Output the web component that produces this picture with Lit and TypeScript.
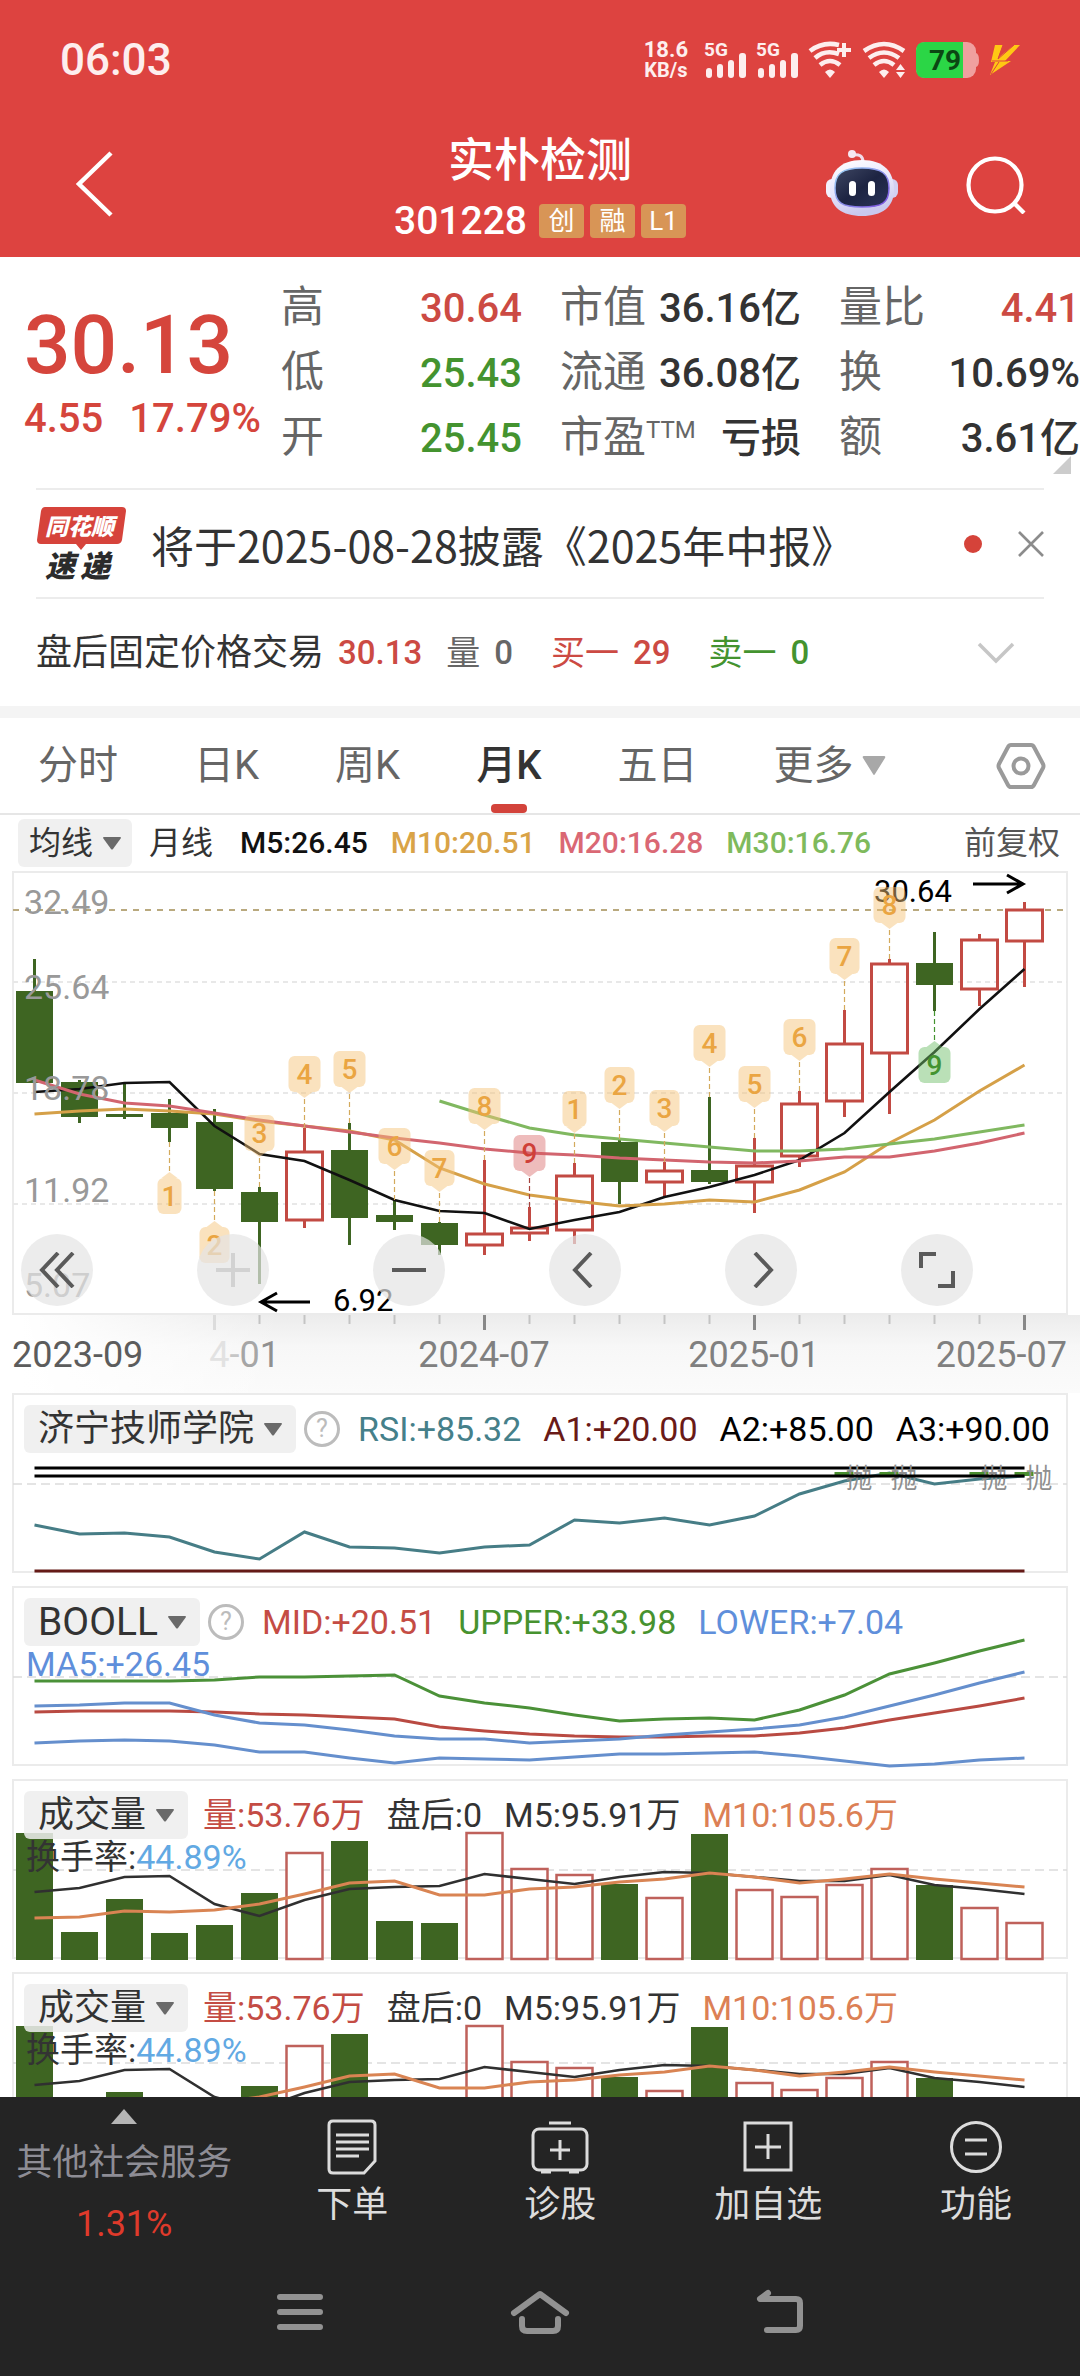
import { LitElement, html, svg, css } from "lit";
import { customElement, property } from "lit/decorators.js";

const FONT = css`Roboto, "Noto Sans CJK SC", sans-serif`;

const STEP = 45;
const FIRST = 34.5;
const cx = (i: number) => FIRST + STEP * i;
const points = (ys: number[], from = 0) => ys.map((y, i) => `${cx(i + from)},${y}`).join(" ");
const line = (ys: number[], color: string, from = 0, width = 3) =>
  svg`<polyline points=${points(ys, from)} fill="none" stroke=${color} stroke-width=${width}></polyline>`;

const UP = "#c24a43";
const DOWN = "#3e6522";

/* up?, high, body top, body bottom, low */
type Candle = [number, number, number, number, number];
const CANDLES: Candle[] = [
  [0, 88, 120, 212, 212], [0, 209, 211, 246, 252], [0, 212, 243, 246, 248], [0, 228, 242, 257, 271],
  [0, 238, 251, 318, 320], [0, 316, 321, 351, 413], [1, 257, 281, 349, 357], [0, 252, 279, 347, 374],
  [0, 329, 344, 351, 359], [0, 351, 352, 374, 384], [1, 289, 363, 374, 384], [1, 336, 357, 362, 370],
  [1, 292, 305, 359, 373], [0, 268, 271, 311, 333], [1, 291, 300, 311, 326], [0, 226, 299, 311, 313],
  [1, 267, 295, 311, 342], [1, 220, 233, 285, 296], [1, 139, 173, 230, 246], [1, 88, 93, 182, 243],
  [0, 61, 92, 114, 140], [1, 63, 69, 118, 135], [1, 31, 39, 70, 116],
];

const MA5 = [221, 218, 212, 211, 255, 283, 290, 309, 329, 340, 342, 358, 349, 341, 326, 316, 304, 289, 262, 221, 181, 138, 98];
const MA10 = [243, 240, 238, 240, 243, 250, 255, 260, 269, 297, 313, 324, 330, 335, 333, 329, 331, 319, 301, 272, 249, 220, 194];
const MA20 = [209, 223, 232, 235, 242, 249, 255, 261, 267, 272, 278, 282, 284, 287, 289, 291, 292, 290, 286, 286, 280, 272, 262];
const MA30 = [230, 244, 257, 264, 268, 272, 276, 280, 280, 278, 273, 268, 261, 254];

/* candle index, digit, placed below the candle?, tone */
const MARKS: [number, string, boolean, string][] = [
  [3, "1", true, "amber"], [4, "2", true, "amber"], [5, "3", false, "amber"], [6, "4", false, "amber"],
  [7, "5", false, "amber"], [8, "6", false, "amber"], [9, "7", false, "amber"], [10, "8", false, "amber"],
  [11, "9", false, "red"], [12, "1", false, "amber"], [13, "2", false, "amber"], [14, "3", false, "amber"],
  [15, "4", false, "amber"], [16, "5", false, "amber"], [17, "6", false, "amber"], [18, "7", false, "amber"],
  [19, "8", false, "amber"], [20, "9", true, "green"],
];
const TONES: Record<string, { bg: string; fg: string; ln: string }> = {
  amber: { bg: "rgba(245,195,120,.48)", fg: "#eaa542", ln: "#d3aa5c" },
  red: { bg: "rgba(215,95,95,.42)", fg: "#cf3f38", ln: "#a5423c" },
  green: { bg: "rgba(110,190,105,.48)", fg: "#43932f", ln: "#43932f" },
};
const MARK_WIDTH: Record<string, number> = { "1": 24, "2": 30, "3": 30, "7": 30 };

const RSI = [132, 141, 140, 144, 159, 166, 139, 154, 155, 160, 154, 152, 127, 130, 125, 132, 123, 101, 88, 80, 91, 86, 83];
const UPPER = [95, 95, 95, 95, 94, 91, 91, 90, 89, 110, 117, 122, 129, 135, 133, 132, 134, 124, 109, 88, 77, 65, 54];
const MID = [126, 125, 125, 125, 126, 128, 129, 131, 133, 141, 145, 148, 150, 151, 151, 150, 150, 147, 142, 134, 127, 120, 112];
const BOLL5 = [120, 119, 117, 117, 129, 137, 139, 144, 150, 153, 153, 157, 155, 153, 149, 146, 143, 139, 131, 120, 109, 97, 86];
const LOWER = [157, 155, 154, 155, 159, 166, 166, 172, 177, 172, 173, 174, 171, 168, 168, 167, 166, 170, 175, 180, 178, 174, 172];
const VOL = [54, 153, 120, 154, 146, 114, 74, 62, 142, 144, 54, 90, 96, 105, 119, 55, 111, 118, 106, 90, 106, 129, 144];
const VOL5 = [113, 109, 98, 97, 125, 137, 121, 110, 108, 107, 95, 100, 105, 98, 93, 94, 98, 102, 102, 96, 106, 110, 115];
const VOL10 = [139, 138, 132, 133, 131, 125, 115, 104, 102, 116, 116, 110, 108, 103, 100, 94, 98, 104, 100, 95, 100, 104, 108];

@customElement("status-bar")
class StatusBar extends LitElement {
  static styles = css`
    :host { display: flex; align-items: center; height: 120px; padding: 0 60px; color: #fdeeee; font-family: ${FONT}; }
    .time { flex: 1; font-size: 44px; font-weight: 500; line-height: 48px; }
    .icons { display: flex; align-items: center; gap: 10px; }
    .speed { display: flex; flex-direction: column; align-items: center; margin-right: 6px; font-weight: 700; font-size: 22px; line-height: 20px; }
    .unit { font-size: 20px; }
    svg { display: block; overflow: visible; }
    .net { font: 700 19px Roboto, sans-serif; }
    .level { font: 700 28px Roboto, sans-serif; }
  `;
  private signal() {
    return html`<svg width="42" height="38" viewBox="0 0 42 38" fill="#fdeeee" aria-hidden="true">
      <text class="net" x="0" y="15">5G</text>
      <rect x="2" y="27" width="6" height="10" rx="3"></rect><rect x="13" y="23" width="6" height="14" rx="3"></rect>
      <rect x="24" y="19" width="6" height="18" rx="3"></rect><rect x="35" y="12" width="7" height="25" rx="3"></rect>
    </svg>`;
  }
  private wifi(extra: unknown, short = false) {
    return html`<svg width="44" height="38" viewBox="0 0 44 38" fill="none" stroke="#fdeeee" stroke-width="4.6" aria-hidden="true">
      <path d=${short ? "M2 10Q15 0 31 4" : "M2 10Q22 -4 42 10"}></path>
      <path d=${short ? "M7 17Q17 8 31 13" : "M7 17Q22 6 37 17"}></path><path d="M12 24Q22 16 32 24"></path>
      <path d="M17 31Q22 26 27 31L22 37Z" fill="#fdeeee" stroke="none"></path>${extra}
    </svg>`;
  }
  render() {
    return html`
      <div class="time">06:03</div>
      <div class="icons">
        <div class="speed"><span>18.6</span><span class="unit">KB/s</span></div>
        ${this.signal()}${this.signal()}
        ${this.wifi(svg`<path d="M36 2V16M29 9H43" stroke-width="4"></path>`, true)}
        ${this.wifi(svg`<path d="M34 29L38.500 23L43 29ZM34 31L38.500 37L43 31Z" fill="#fdeeee" stroke="none"></path>`)}
        <svg width="64" height="36" viewBox="0 0 64 36" role="img" aria-label="79%">
          <rect width="60" height="36" rx="9" fill="#f0a09f"></rect>
          <path d="M60 11Q63 12 63 18T60 25Z" fill="#f0a09f"></path>
          <path d="M9 0H47V36H9Q0 36 0 27V9Q0 0 9 0Z" fill="#2bd646"></path>
          <text class="level" x="13" y="28" fill="#0b4713">79</text>
        </svg>
        <svg width="30" height="32" viewBox="0 0 30 32" fill="#ffc814" aria-hidden="true">
          <path d="M5 1H13L8 14L24 1H30L15 17H21L0 31L5 18H1Z"></path>
          <path d="M13 1L8 15L24 1M2 17H18M1 30L9 18" fill="none" stroke="#dd4340" stroke-width="1"></path>
        </svg>
      </div>`;
  }
}

@customElement("title-bar")
class TitleBar extends LitElement {
  static styles = css`
    :host { display: grid; grid-template-columns: 1fr auto 1fr; align-items: center; height: 127px; padding: 0 54px 10px; color: #fff; font-family: ${FONT}; }
    button { border: 0; padding: 0; background: none; color: inherit; cursor: pointer; justify-self: start; }
    .back { margin-left: 20px; }
    svg { display: block; }
    .mid { display: flex; flex-direction: column; align-items: center; gap: 12px; padding-top: 8px; }
    h1 { margin: 0; font-size: 46px; font-weight: 500; line-height: 54px; }
    .sub { display: flex; align-items: center; gap: 6px; font-size: 39px; font-weight: 500; line-height: 44px; }
    .code { margin-right: 6px; }
    .tag { width: 45px; border-radius: 4px; background: #d89556; font-size: 26px; font-weight: 400; line-height: 34px; text-align: center; }
    .acts { display: flex; align-items: center; justify-content: flex-end; gap: 68px; }
  `;
  render() {
    return html`
      <button class="back" aria-label="返回"><svg width="40" height="66" viewBox="0 0 40 66" fill="none" stroke="#fff" stroke-width="4.500"><path d="M37 2L5 33L37 64"></path></svg></button>
      <div class="mid">
        <h1>实朴检测</h1>
        <div class="sub"><span class="code">301228</span><span class="tag">创</span><span class="tag">融</span><span class="tag">L1</span></div>
      </div>
      <div class="acts">
        <button aria-label="助手"><svg width="72" height="68" viewBox="0 0 72 68">
          <defs>
            <linearGradient id="shell" x1="0" y1="0" x2="0.300" y2="1"><stop offset="0" stop-color="#fff"></stop><stop offset=".55" stop-color="#e8e6fb"></stop><stop offset="1" stop-color="#c9c8ee"></stop></linearGradient>
            <linearGradient id="rim" x1="0" y1="0" x2="1" y2="1"><stop offset="0" stop-color="#9bd5f3"></stop><stop offset="1" stop-color="#7a4be0"></stop></linearGradient>
            <linearGradient id="face" x1="0" y1="0" x2="1" y2="1"><stop offset="0" stop-color="#3f4763"></stop><stop offset=".5" stop-color="#1d2442"></stop><stop offset="1" stop-color="#2a3358"></stop></linearGradient>
          </defs>
          <path d="M26 5Q37 3 37 12" fill="none" stroke="#f1dcea" stroke-width="3"></path>
          <circle cx="26" cy="4" r="4" fill="#f6e8f2"></circle>
          <rect x="0" y="29" width="12" height="19" rx="6" fill="#f3f1fd"></rect><rect x="60" y="29" width="12" height="19" rx="6" fill="#d3d0f2"></rect>
          <path d="M36 10C58 10 68 22 68 40C68 57 56 66 36 66S4 57 4 40C4 22 14 10 36 10Z" fill="url(#shell)"></path>
          <path d="M36 18C56 18 63 24 63 38C63 53 56 57 36 57S9 53 9 38C9 24 16 18 36 18Z" fill="url(#face)" stroke="url(#rim)" stroke-width="1.500"></path>
          <rect x="23" y="31" width="7" height="15" rx="3.500" fill="#fff"></rect><rect x="42" y="31" width="7" height="15" rx="3.500" fill="#fff"></rect>
        </svg></button>
        <button aria-label="搜索"><svg width="60" height="60" viewBox="0 0 60 60" fill="none" stroke="#fff" stroke-width="4.200"><circle cx="29" cy="31" r="26.500"></circle><path d="M48 49L58 59"></path></svg></button>
      </div>`;
  }
}

@customElement("quote-board")
class QuoteBoard extends LitElement {
  static styles = css`
    :host { display: grid; position: relative; grid-template-columns: minmax(0, 219fr) repeat(3, minmax(0, 241fr)); column-gap: 38px; padding: 18px 0 18px 24px; font-family: ${FONT}; color: #333; white-space: nowrap; }
    .now { display: flex; flex-direction: column; color: #d5453c; font-weight: 500; }
    .price { margin-top: 20px; font-size: 82px; line-height: 100px; }
    .delta { display: flex; gap: 26px; font-size: 40px; line-height: 48px; }
    .row { display: flex; justify-content: space-between; align-items: baseline; height: 65px; font-size: 40px; font-weight: 500; line-height: 65px; }
    .label { color: #666; font-size: 43px; font-weight: 400; }
    .ttm { font-size: 24px; line-height: 24px; vertical-align: 14px; }
    .up { color: #cc4a43; }
    .down { color: #44932f; }
    .corner { position: absolute; right: 9px; bottom: 14px; fill: #ccc; }
  `;
  private row(label: unknown, value: string, tone = "") {
    return html`<div class="row"><span class="label">${label}</span><span class=${tone}>${value}</span></div>`;
  }
  render() {
    return html`
      <div class="now"><span class="price">30.13</span><div class="delta"><span>4.55</span><span>17.79%</span></div></div>
      <div>${this.row("高", "30.64", "up")}${this.row("低", "25.43", "down")}${this.row("开", "25.45", "down")}</div>
      <div>${this.row("市值", "36.16亿")}${this.row("流通", "36.08亿")}${this.row(html`市盈<span class="ttm">TTM</span>`, "亏损")}</div>
      <div>${this.row("量比", "4.41", "up")}${this.row("换", "10.69%")}${this.row("额", "3.61亿")}</div>
      <svg class="corner" width="18" height="18" viewBox="0 0 18 18" aria-hidden="true"><path d="M18 0V18H0Z"></path></svg>`;
  }
}

@customElement("news-strip")
class NewsStrip extends LitElement {
  static styles = css`
    :host { display: block; padding: 0 36px; font-family: ${FONT}; color: #333; white-space: nowrap; }
    .line { display: flex; align-items: center; height: 107px; border-top: 2px solid #ececec; line-height: 50px; }
    .news { flex: 1; margin-left: 24px; font-family: "Noto Sans CJK SC", sans-serif; font-size: 43px; color: #333; text-decoration: none; }
    .dot { width: 18px; height: 18px; border-radius: 50%; background: #d5433a; margin-right: 36px; }
    button { border: 0; padding: 0; background: none; cursor: pointer; }
    svg { display: block; overflow: visible; }
    .brand { font: italic 900 23px "Noto Sans CJK SC", sans-serif; fill: #fff; }
    .brand2 { font: italic 900 30px "Noto Sans CJK SC", sans-serif; fill: #2b2b2b; }
    .after { font-size: 34px; }
    .after span { margin-right: 14px; }
    .after .title { font-size: 36px; }
    .after .n { font-size: 33px; font-weight: 500; margin-right: 38px; }
    .after .last { margin-right: 24px; }
    .up { color: #cc4a43; }
    .down { color: #44932f; }
    .gray { color: #666; }
    .more { margin: 0 30px 0 auto; }
  `;
  render() {
    return html`
      <div class="line">
        <svg width="91" height="76" viewBox="0 0 91 76" role="img" aria-label="同花顺速递">
          <path d="M9 1H86Q90 1 90 5L86 34Q85 38 81 38H50L45 44L40 38H5Q1 38 1 34L5 5Q6 1 9 1Z" fill="#d6433b"></path>
          <text class="brand" x="9" y="29">同花顺</text>
          <text class="brand2" x="9" y="71">速</text><text class="brand2" x="44" y="71">递</text>
        </svg>
        <a class="news" href="#news">将于2025-08-28披露《2025年中报》</a>
        <span class="dot"></span>
        <button aria-label="关闭"><svg width="26" height="26" viewBox="0 0 26 26" stroke="#8c8c8c" stroke-width="2.600"><path d="M1 1L25 25M25 1L1 25"></path></svg></button>
      </div>
      <div class="line after">
        <span class="title">盘后固定价格交易</span><span class="n last up">30.13</span>
        <span class="gray">量</span><span class="n gray">0</span>
        <span class="up">买一</span><span class="n up">29</span>
        <span class="down">卖一</span><span class="n down">0</span>
        <button class="more" aria-label="展开"><svg width="36" height="22" viewBox="0 0 36 22" fill="none" stroke="#c6c6c6" stroke-width="3.500"><path d="M1 2L18 19L35 2"></path></svg></button>
      </div>`;
  }
}

@customElement("period-tabs")
class PeriodTabs extends LitElement {
  static styles = css`
    :host { display: flex; align-items: stretch; gap: 76px; height: 95px; padding: 0 34px 0 38px; border-top: 12px solid #f4f4f4; border-bottom: 2px solid #e6e6e6; font-family: ${FONT}; }
    button { display: flex; align-items: center; justify-content: center; gap: 8px; position: relative; border: 0; padding: 0 0 0; background: none; color: #666; font: 400 40px/48px ${FONT}; white-space: nowrap; cursor: pointer; }
    .on { color: #333; font-weight: 500; }
    .on::after { content: ""; position: absolute; bottom: 0; left: 50%; width: 36px; height: 9px; margin-left: -18px; border-radius: 4px; background: #d3433b; }
    .gear { margin-left: auto; }
  `;
  render() {
    return html`
      <button>分时</button><button>日K</button><button>周K</button><button class="on">月K</button><button>五日</button>
      <button>更多<svg width="24" height="20" viewBox="0 0 24 20" fill="#a8a8a8"><path d="M2 0H22Q24 0 23 2L13 18Q12 20 11 18L1 2Q0 0 2 0Z"></path></svg></button>
      <button class="gear" aria-label="设置"><svg width="50" height="46" viewBox="0 0 50 46" fill="none" stroke="#9a9a9a" stroke-width="4"><path d="M15 2H35Q37 2 38 4L47 21Q48 23 47 25L38 42Q37 44 35 44H15Q13 44 12 42L3 25Q2 23 3 21L12 4Q13 2 15 2Z"></path><circle cx="25" cy="23" r="7.500"></circle></svg></button>`;
  }
}

const chipCss = css`
  .chip { display: flex; align-items: center; gap: 10px; height: 48px; padding: 0 14px; border: 0; border-radius: 6px; background: rgba(238, 238, 238, 0.86); color: #333; font: 400 36px/44px ${FONT}; white-space: nowrap; cursor: pointer; }
  .chip svg { fill: #6a6a6a; }
`;
const caret = html`<svg width="18" height="13" viewBox="0 0 18 13" aria-hidden="true"><path d="M1 0H17Q18 0 18 1L10 12Q9 13 8 12L0 1Q0 0 1 0Z"></path></svg>`;

@customElement("k-chart")
class KChart extends LitElement {
  static styles = [chipCss, css`
    :host { display: block; font-family: ${FONT}; }
    .legend { display: flex; align-items: center; gap: 23px; height: 56px; padding: 0 20px 0 18px; font-size: 30px; font-weight: 500; line-height: 44px; white-space: nowrap; }
    .legend .chip, .name, .right { font-size: 32px; }
    .name { margin: 0 4px 0 -6px; font-weight: 400; color: #333; }
    .right { margin-left: auto; font-weight: 400; color: #555; }
    .chip { padding: 0 11px; }
    .m5 { color: #111; } .m10 { color: #d9a347; } .m20 { color: #da6874; } .m30 { color: #7fba5c; }
    .stack { display: grid; grid-template-columns: minmax(0, 1fr); }
    .plot, .ctl { grid-area: 1 / 1; }
    svg { display: block; }
    .plot, .dates { width: 100%; height: auto; overflow: visible; }
    .ctl { display: flex; justify-content: space-between; align-self: end; padding: 0 107px 9px 21px; }
    .ctl button { display: flex; align-items: center; justify-content: center; width: 72px; height: 72px; padding: 0; border: 0; border-radius: 50%; background: rgba(228, 228, 228, 0.7); color: #5a5a5a; cursor: pointer; }
    .ctl .off { color: #d2d2d2; }
    .ctl svg { fill: none; stroke: currentColor; stroke-width: 4; }
    .scale { font: 400 34px ${FONT}; fill: #999; }
    .peak { font: 400 31px ${FONT}; }
    .digit { font: 500 28px ${FONT}; }
    .date { font: 400 36px ${FONT}; fill: #808080; }
    .axis { background: linear-gradient(to right, #fff 2%, rgba(255, 255, 255, 0) 26%), linear-gradient(#ececec, #f7f7f7 40%, #fbfbfb); }
  `];
  private candle([up, high, top, bottom, low]: Candle, i: number) {
    const x = cx(i);
    return up
      ? svg`<path d="M${x} ${high}V${top}M${x} ${bottom}V${low}" stroke=${UP} stroke-width="3"></path>
            <rect x=${x - 18} y=${top} width="36" height=${bottom - top} fill="none" stroke=${UP} stroke-width="3"></rect>`
      : svg`<path d="M${x} ${high}V${low}" stroke=${DOWN} stroke-width="3"></path>
            <rect x=${x - 18.5} y=${top} width="37" height=${bottom - top} fill=${DOWN}></rect>`;
  }
  private mark([i, digit, below, tone]: [number, string, boolean, string]) {
    const x = cx(i);
    const t = TONES[tone];
    const w = MARK_WIDTH[digit] ?? 32;
    const edge = below ? CANDLES[i][4] : CANDLES[i][1];
    const top = below ? edge + 36 : edge - 72;
    const tip = below ? `M${x - 8} ${top}L${x} ${top - 6}L${x + 8} ${top}Z` : `M${x - 8} ${top + 36}L${x} ${top + 42}L${x + 8} ${top + 36}Z`;
    return svg`
      <path d="M${x} ${edge}V${below ? edge + 30 : edge - 30}" stroke=${t.ln} stroke-width="1.200" stroke-dasharray="5 3"></path>
      <rect x=${x - w / 2} y=${top} width=${w} height="36" rx="6" fill=${t.bg}></rect><path d=${tip} fill=${t.bg}></path>
      <text class="digit" x=${x} y=${top + 28} text-anchor="middle" fill=${t.fg}>${digit}</text>`;
  }
  render() {
    const ticks = Array.from({ length: 19 }, (_, k) => k + 4);
    return html`
      <div class="legend">
        <button class="chip">均线${caret}</button><span class="name">月线</span>
        <span class="m5">M5:26.45</span><span class="m10">M10:20.51</span><span class="m20">M20:16.28</span><span class="m30">M30:16.76</span>
        <span class="right">前复权</span>
      </div>
      <div class="stack">
        <svg class="plot" viewBox="0 0 1080 444" role="img" aria-label="月K">
          <rect x="13" y="1" width="1054" height="442" fill="none" stroke="#ebebeb" stroke-width="2"></rect>
          <path d="M13 111H1067M13 222H1067M13 333H1067" stroke="#e8e8e8" stroke-width="2" stroke-dasharray="5 4"></path>
          <path d="M13 39H1067" stroke="#b9a97e" stroke-width="2" stroke-dasharray="6 6"></path>
          ${CANDLES.map((c, i) => this.candle(c, i))}
          ${line(MA5, "#111", 0, 2.6)}${line(MA10, "#d5a048")}${line(MA20, "#d2656f")}${line(MA30, "#80b860", 9)}
          ${["32.49", "25.64", "18.78", "11.92", "5.07"].map((t, i) => svg`<text class="scale" x="24" y=${[43, 128, 229, 331, 426][i]}>${t}</text>`)}
          <text class="peak" x="333" y="440">6.92</text>
          <text class="peak" x="874" y="31">30.64</text>
          <path d="M310 431H261M277 422L261 431L277 440M973 13H1023M1007 4L1023 13L1007 22" fill="none" stroke="#000" stroke-width="3"></path>
          ${MARKS.map((m) => this.mark(m))}
        </svg>
        <div class="ctl">
          <button aria-label="快退"><svg width="36" height="36" viewBox="0 0 36 36"><path d="M19 1L3 18L19 35M34 1L18 18L34 35"></path></svg></button>
          <button class="off" aria-label="放大"><svg width="36" height="36" viewBox="0 0 36 36"><path d="M18 1V35M1 18H35"></path></svg></button>
          <button aria-label="缩小"><svg width="36" height="36" viewBox="0 0 36 36"><path d="M1 18H35"></path></svg></button>
          <button aria-label="左移"><svg width="36" height="36" viewBox="0 0 36 36"><path d="M24 1L8 18L24 35"></path></svg></button>
          <button aria-label="右移"><svg width="36" height="36" viewBox="0 0 36 36"><path d="M12 1L28 18L12 35"></path></svg></button>
          <button aria-label="全屏"><svg width="40" height="40" viewBox="0 0 40 40"><path d="M4 18V4H19M36 21V36H21"></path></svg></button>
        </div>
      </div>
      <div class="axis">
        <svg class="dates" viewBox="0 0 1080 78">
          ${ticks.map((i) => (i - 4) % 6 === 0
            ? svg`<path d="M${cx(i)} 0V15" stroke=${i === 4 ? "#dcdcdc" : "#888"} stroke-width="3"></path>`
            : svg`<path d="M${cx(i)} 0V9" stroke="#c4c4c4" stroke-width="2"></path>`)}
          <text class="date" x="12" y="52" style="fill:#5c5c5c">2023-09</text>
          <text class="date" x="280" y="52" text-anchor="end"><tspan fill="#e2e2e2">4</tspan><tspan fill="#c6c6c6">-</tspan><tspan fill="#a6a6a6">0</tspan><tspan fill="#909090">1</tspan></text>
          <text class="date" x="484" y="52" text-anchor="middle">2024-07</text>
          <text class="date" x="754" y="52" text-anchor="middle">2025-01</text>
          <text class="date" x="1067" y="52" text-anchor="end">2025-07</text>
        </svg>
      </div>`;
  }
}

@customElement("sub-chart")
class SubChart extends LitElement {
  @property() kind = "vol";
  static styles = [chipCss, css`
    :host { display: grid; grid-template-columns: minmax(0, 1fr); margin-bottom: 13px; font-family: ${FONT}; }
    .plot, .over { grid-area: 1 / 1; }
    .plot { display: block; width: 100%; height: auto; }
    .over { padding: 12px 24px 0; font-size: 34px; line-height: 44px; white-space: nowrap; }
    .top { display: flex; align-items: center; gap: 22px; height: 48px; }
    .latin { font-size: 39px; }
    .help { width: 36px; height: 36px; margin: 0 -4px 0 -14px; padding: 0; border: 3px solid #bcbcbc; border-radius: 50%; background: none; color: #bcbcbc; box-sizing: border-box; font: 400 25px/30px ${FONT}; cursor: pointer; }
    .vol .chip { margin-right: -7px; }
    .second { padding-left: 2px; line-height: 36px; }
    .teal { color: #45808a; } .wine { color: #6a1a17; } .black { color: #000; } .dark { color: #333; }
    .red { color: #c44c44; } .green { color: #47922f; } .blue { color: #5f8fdb; } .orange { color: #dc8055; } .sky { color: #62a9e3; }
    .sell { font: 400 27px ${FONT}; fill: #8f8f8f; }
  `];
  private frame(inner: unknown) {
    return html`<svg class="plot" viewBox="0 0 1080 180" overflow="visible">
      <rect x="13" y="1" width="1054" height="178" fill="none" stroke="#ebebeb" stroke-width="2"></rect>
      <path d="M13 91H1067" stroke="#dcdcdc" stroke-width="1.500" stroke-dasharray="9 5"></path>${inner}</svg>`;
  }
  private help() {
    return html`<button class="help" aria-label="说明">?</button>`;
  }
  private rsi() {
    const flat = (y: number) => Array(23).fill(y);
    return html`${this.frame(svg`
        ${line(RSI, "#467d86")}${line(flat(178), "#651a17")}${line(flat(75), "#000")}
        ${[18, 19, 21, 22].map((i) => svg`<rect x=${cx(i) - 10} y="79" width="19" height="4" fill="#4a8f2f"></rect><text class="sell" x=${cx(i) + 1} y="95">抛</text>`)}
        ${line(flat(83), "#000")}`)}
      <div class="over"><div class="top"><button class="chip">济宁技师学院${caret}</button>${this.help()}
        <span class="teal">RSI:+85.32</span><span class="wine">A1:+20.00</span><span class="black">A2:+85.00</span><span class="black">A3:+90.00</span></div></div>`;
  }
  private boll() {
    return html`${this.frame(svg`${line(UPPER, "#4b9138")}${line(MID, "#b94a42")}${line(BOLL5, "#658fcd")}${line(LOWER, "#658fcd")}`)}
      <div class="over"><div class="top"><button class="chip latin">BOOLL${caret}</button>${this.help()}
        <span class="red">MID:+20.51</span><span class="green">UPPER:+33.98</span><span class="blue">LOWER:+7.04</span></div>
        <div class="second blue">MA5:+26.45</div></div>`;
  }
  private vol() {
    return html`${this.frame(svg`
        ${VOL.map((y, i) => CANDLES[i][0]
          ? svg`<rect x=${cx(i) - 18} y=${y} width="36" height=${180 - y} fill="#fff" stroke="#bf615b" stroke-width="2.500"></rect>`
          : svg`<rect x=${cx(i) - 18.5} y=${y} width="37" height=${181 - y} fill=${DOWN}></rect>`)}
        ${line(VOL5, "#303030", 0, 2.6)}${line(VOL10, "#d98453")}`)}
      <div class="over vol"><div class="top"><button class="chip">成交量${caret}</button>
        <span class="red">量:53.76万</span><span class="dark">盘后:0</span><span class="dark">M5:95.91万</span><span class="orange">M10:105.6万</span></div>
        <div class="second dark">换手率:<span class="sky">44.89%</span></div></div>`;
  }
  render() {
    return this.kind === "rsi" ? this.rsi() : this.kind === "boll" ? this.boll() : this.vol();
  }
}

@customElement("bottom-dock")
class BottomDock extends LitElement {
  static styles = css`
    :host { display: block; position: relative; background: #242424; font-family: ${FONT}; color: #dcdcdc; }
    .items { display: grid; grid-template-columns: 23% repeat(4, 1fr); }
    button { display: flex; flex-direction: column; align-items: center; border: 0; padding: 0; background: none; color: inherit; font: 400 36px/44px ${FONT}; white-space: nowrap; cursor: pointer; }
    .items button { gap: 7px; padding-top: 21px; }
    .items .index { gap: 17px; padding-top: 12px; color: #8e8d95; }
    .pct { color: #df3a2b; }
    .glyph { width: 60px; height: 58px; fill: none; stroke: #dcdcdc; stroke-width: 3; }
    .nav { display: grid; grid-template-columns: repeat(3, 1fr); padding: 41px 16.666% 39px; height: 50px; }
    .nav button { justify-content: center; }
    .nav svg { fill: none; stroke: #929292; stroke-width: 6; stroke-linecap: round; stroke-linejoin: round; }
  `;
  render() {
    return html`
      <div class="items">
        <button class="index"><svg width="26" height="15" viewBox="0 0 26 15" fill="#b5b5b5"><path d="M13 0L26 15H0Z"></path></svg>
          <span>其他社会服务</span><span class="pct">1.31%</span></button>
        <button><svg class="glyph" viewBox="0 0 60 58"><path d="M11 3H49Q53 3 53 7V43L42 55H11Q7 55 7 51V7Q7 3 11 3Z"></path><path d="M14 17H47M14 24H47M14 31H47M14 38H37"></path></svg>下单</button>
        <button><svg class="glyph" viewBox="0 0 60 58"><rect x="3" y="11" width="54" height="41" rx="6"></rect><path d="M19 5H41M30 22V42M20 32H40M11 54H21M39 54H49"></path></svg>诊股</button>
        <button><svg class="glyph" viewBox="0 0 60 58"><rect x="7" y="5" width="46" height="47"></rect><path d="M30 16V41M17 29H43"></path></svg>加自选</button>
        <button><svg class="glyph" viewBox="0 0 60 58"><circle cx="30" cy="29" r="24.500"></circle><path d="M19 22H41M19 36H41"></path></svg>功能</button>
      </div>
      <div class="nav">
        <button aria-label="任务"><svg width="50" height="44" viewBox="0 0 50 44"><path d="M5 7H45M5 22H45M5 37H45"></path></svg></button>
        <button aria-label="主页"><svg width="60" height="46" viewBox="0 0 60 46"><path d="M4 24L30 5L56 24M12 30V37Q12 42 17 42H43Q48 42 48 37V30"></path></svg></button>
        <button aria-label="后退"><svg width="50" height="46" viewBox="0 0 50 46"><path d="M13 4L5 10H41Q45 10 45 14V37Q45 41 41 41H12"></path></svg></button>
      </div>`;
  }
}

@customElement("app-root")
class AppRoot extends LitElement {
  static styles = css`
    :host { display: flex; flex-direction: column; height: 100vh; overflow: hidden; background: #fff; }
    header { background: #dd4340; }
    main { flex: 1; min-height: 0; overflow: hidden; }
  `;
  render() {
    return html`
      <header><status-bar></status-bar><title-bar></title-bar></header>
      <main>
        <quote-board></quote-board>
        <news-strip></news-strip>
        <period-tabs></period-tabs>
        <k-chart></k-chart>
        <sub-chart kind="rsi"></sub-chart>
        <sub-chart kind="boll"></sub-chart>
        <sub-chart kind="vol"></sub-chart>
        <sub-chart kind="vol"></sub-chart>
      </main>
      <bottom-dock></bottom-dock>`;
  }
}
